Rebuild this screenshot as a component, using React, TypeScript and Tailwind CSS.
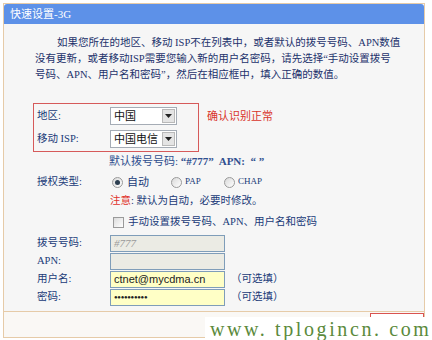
const cjk = "font-['Liberation_Serif','Noto_Sans_CJK_SC',sans-serif]";

function Select({ value }: { value: string }) {
  return (
    <div className="flex h-[18px] w-[67px] items-center border border-[#a5acb5] bg-white">
      <span className="flex-1 pl-[3px] text-[11px] leading-[16px] text-[#111]">{value}</span>
      <span className="mr-[1px] flex h-[14px] w-[13px] items-center justify-center border border-[#b9b9b9] bg-[#e4e4e4]">
        <svg width="7" height="4" viewBox="0 0 7 4">
          <path d="M0 0h7L3.5 4z" fill="#222" />
        </svg>
      </span>
    </div>
  );
}

function Radio({ checked }: { checked?: boolean }) {
  return (
    <span className="flex h-[11px] w-[11px] items-center justify-center rounded-full border border-[#9a9a9a] bg-gradient-to-br from-[#d9d9d9] to-white">
      {checked && <span className="h-[5px] w-[5px] rounded-full bg-[#2c3e50]" />}
    </span>
  );
}

function Row({ label, children }: { label: string; children: React.ReactNode }) {
  return (
    <div className="flex h-[18px] items-center">
      <span className="w-[77px] pl-[4px] text-[10.5px] text-[#203a78]">{label}</span>
      {children}
    </div>
  );
}

function Field({ value, disabled, italic, dots }: { value?: string; disabled?: boolean; italic?: boolean; dots?: boolean }) {
  return (
    <div
      className={`flex h-[17px] w-[115px] items-center border border-[#7f9db9] pl-[3px] ${
        disabled ? 'bg-[#ebebe4]' : 'bg-[#ffffc6]'
      }`}
    >
      <span
        className={`leading-[15px] ${
          italic
            ? "text-[11px] italic text-[#9a9a9a] font-['Liberation_Serif',serif]"
            : dots
              ? "text-[6px] tracking-[-0.3px] text-[#222] font-['Liberation_Sans',sans-serif]"
              : "text-[11px] text-[#222] font-['Liberation_Sans',sans-serif]"
        }`}
      >
        {value}
      </span>
    </div>
  );
}

export default function App() {
  return (
    <div className={`relative h-[340px] w-[432px] overflow-hidden bg-white ${cjk}`}>
      <div className="ml-[3px] mt-[3px] w-[422px] border border-[#e6cba8]">
        <div className="h-[20px] rounded-t-[3px] bg-[#5d91e8] pl-[6px] text-[11px] leading-[20px] text-white">
          快速设置-3G
        </div>

        <div className="h-[287px] bg-[#f6f6f6] pl-[29px]">
          <div className="pt-[11px] pl-[2px] text-[10.5px] leading-[16px] text-[#1d326c]">
            <p className="pl-[22px]">如果您所在的地区、移动 ISP不在列表中，或者默认的拨号号码、APN数值</p>
            <p>没有更新，或者移动ISP需要您输入新的用户名密码，请先选择“手动设置拨号</p>
            <p>号码、APN、用户名和密码”，然后在相应框中，填入正确的数值。</p>
          </div>

          <div className="mt-[20px] flex items-start">
            <div className="flex w-[166px] flex-col gap-[3px] border border-[#d65a5a] pt-[2px] pb-[2px]">
              <div className="flex h-[20px] items-center">
                <span className="w-[76px] pl-[3px] text-[10.5px] text-[#203a78]">地区:</span>
                <Select value="中国" />
              </div>
              <div className="flex h-[20px] items-center">
                <span className="w-[76px] pl-[3px] text-[10.5px] text-[#203a78]">移动 ISP:</span>
                <Select value="中国电信" />
              </div>
            </div>
            <span className="ml-[8px] mt-[6px] text-[11px] leading-[14px] text-[#d9342b]">确认识别正常</span>
          </div>

          <div className="mt-[2px] flex h-[14px] items-center whitespace-pre pl-[76px] text-[11px] text-[#2f4f8f]">
            默认拨号号码: <span className="font-bold">“#777”  APN:  “ ”</span>
          </div>

          <div className="mt-[5px]">
            <Row label="授权类型:">
              <div className="flex items-center text-[10.5px] text-[#203a78]">
                <span className="ml-[2px]"><Radio checked /></span>
                <span className="ml-[4px] w-[44px] text-[11px]">自动</span>
                <Radio />
                <span className="ml-[3px] w-[39px] text-[9px]">PAP</span>
                <Radio />
                <span className="ml-[3px] text-[9px]">CHAP</span>
              </div>
            </Row>
          </div>

          <div className="mt-[1px] flex h-[18px] items-center pl-[77px] text-[10.5px] text-[#203a78]">
            <span className="text-[#e0322a]">注意</span>: 默认为自动，必要时修改。
          </div>

          <div className="mt-[3px] flex h-[18px] items-center pl-[80px] text-[10.5px] text-[#203a78]">
            <span className="mr-[4px] h-[11px] w-[11px] border border-[#9a9a9a] bg-gradient-to-br from-[#dcdcdc] to-white" />
            手动设置拨号号码、APN、用户名和密码
          </div>

          <div className="mt-[3px]">
            <Row label="拨号号码:">
              <Field value="#777" disabled italic />
            </Row>
            <Row label="APN:">
              <Field disabled />
            </Row>
            <Row label="用户名:">
              <Field value="ctnet@mycdma.cn" />
              <span className="ml-[6px] text-[10.5px] text-[#203a78]">（可选填）</span>
            </Row>
            <Row label="密码:">
              <Field value="●●●●●●●●●●" dots />
              <span className="ml-[6px] text-[10.5px] text-[#203a78]">（可选填）</span>
            </Row>
          </div>
        </div>

        <div className="flex h-[26px] justify-end border-t border-[#e6cba8] bg-[#faf8f5]">
          <div className="mt-[1px] h-[20px] w-[54px] border border-[#d9534f] bg-white" />
        </div>
      </div>

      <div className="absolute bottom-0 left-[205px] flex h-[23px] w-[227px] items-center bg-white pl-[5px] font-['Liberation_Serif',serif] text-[20px] tracking-[2.6px] text-[#5b8a3c]">
        www. tplogincn. com
      </div>
    </div>
  );
}
